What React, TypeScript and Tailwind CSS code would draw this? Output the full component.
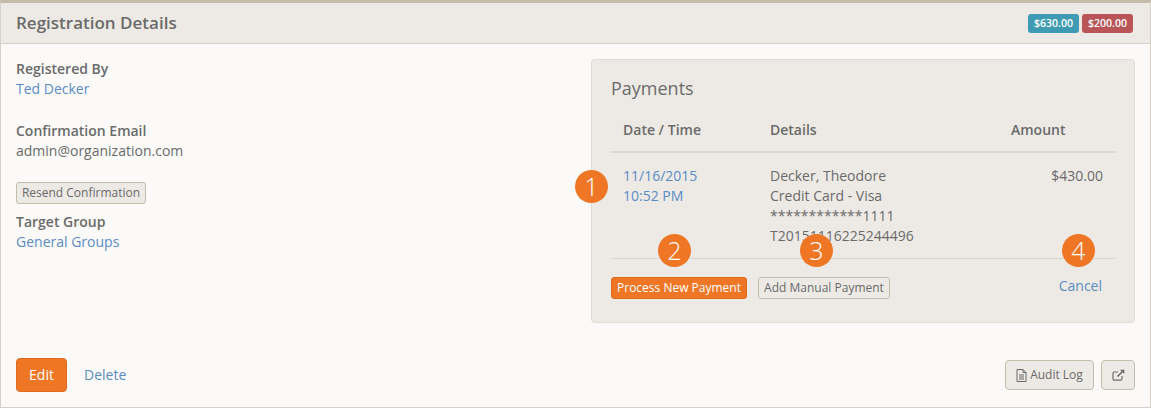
import React from "react";

const Badge = ({ n, className }: { n: number; className: string }) => (
  <div className={`absolute w-[33px] h-[33px] rounded-full bg-[#ee7625] text-white flex items-center justify-center text-[25px] font-light leading-none ${className}`}>
    {n}
  </div>
);

const DocIcon = () => (
  <svg width="11" height="13" viewBox="0 0 11 13" fill="none" stroke="#6a6a6a" strokeWidth="1" className="mr-[3px]">
    <path d="M1 .5h6l3 3v9H1z" />
    <path d="M7 .5v3h3M3 6h5M3 8h5M3 10h5" />
  </svg>
);

const ExternalIcon = () => (
  <svg width="13" height="12" viewBox="0 0 13 12" fill="none" stroke="#6a6a6a">
    <path d="M10 7v3a1.2 1.2 0 0 1-1.2 1.2H2.2A1.2 1.2 0 0 1 1 10V4.2A1.2 1.2 0 0 1 2.2 3H6" strokeWidth="1.2" />
    <path d="M5.5 7.5 11 2" strokeWidth="1.6" />
    <path d="M8 .7h4.3V5z" fill="#6a6a6a" stroke="none" />
  </svg>
);

export default function App() {
  return (
    <div className="w-[1151px] h-[408px] bg-[#fbfaf8] border-t-[3px] border-t-[#c4bcab] border-x border-x-[#d6d0c8] border-b border-b-[#d6d0c8] flex flex-col text-[14px] leading-[20px] text-[#6a6a6a] font-['Open_Sans',sans-serif] relative overflow-hidden">
      <div className="h-[41px] shrink-0 bg-[#edeae6] border-b border-[#d6d0c8] flex items-center justify-between pl-[15px] pr-[17px]">
        <h1 className="text-[17px] font-semibold leading-[20px] text-[#6a6a6a]">Registration Details</h1>
        <div className="flex gap-[3px]">
          <span className="h-[19px] w-[51px] rounded-[3px] bg-[#3f9bb3] text-white text-[10.5px] font-semibold flex items-center justify-center">$630.00</span>
          <span className="h-[19px] w-[51px] rounded-[3px] bg-[#b95557] text-white text-[10.5px] font-semibold flex items-center justify-center">$200.00</span>
        </div>
      </div>

      <div className="flex-1 flex justify-between pl-[15px] pr-[15px] pt-[15px]">
        <div className="flex flex-col w-[400px]">
          <div className="font-semibold">Registered By</div>
          <a className="text-[#5a8cc4]">Ted Decker</a>
          <div className="font-semibold mt-[22px]">Confirmation Email</div>
          <div>admin@organization.com</div>
          <button className="self-start mt-[21px] h-[22px] w-[130px] rounded-[3px] border border-[#c4bcab] bg-[#edeae6] text-[12px] leading-none text-[#6a6a6a] flex items-center justify-center whitespace-nowrap">Resend Confirmation</button>
          <div className="font-semibold mt-[8px]">Target Group</div>
          <a className="text-[#5a8cc4]">General Groups</a>
        </div>

        <div className="w-[544px] h-[264px] rounded-[4px] border border-[#e0dcd5] bg-[#edeae6] pt-[17px] px-[19px] flex flex-col">
          <h2 className="text-[18px] leading-[22px] text-[#6a6a6a]">Payments</h2>
          <div className="flex font-semibold h-[20px] mt-[21px] px-[12px]">
            <div className="w-[147px]">Date / Time</div>
            <div className="w-[241px]">Details</div>
            <div>Amount</div>
          </div>
          <div className="border-t-2 border-[#dad6cf] mt-[11px] pt-[13px] pb-[12px] px-[12px] flex">
            <div className="w-[147px] text-[#5a8cc4]">
              <div>11/16/2015</div>
              <div>10:52 PM</div>
            </div>
            <div className="flex-1">
              <div>Decker, Theodore</div>
              <div>Credit Card - Visa</div>
              <div>************1111</div>
              <div>T20151116225244496</div>
            </div>
            <div>$430.00</div>
          </div>
          <div className="border-t border-[#dad6cf] pt-[18px] flex items-start">
            <button className="h-[22px] w-[136px] rounded-[3px] bg-[#ee7625] border border-[#dd6a1e] text-white text-[12px] leading-none flex items-center justify-center whitespace-nowrap">Process New Payment</button>
            <button className="ml-[11px] h-[22px] w-[132px] rounded-[3px] border border-[#c4bcab] bg-[#edeae6] text-[12px] leading-none text-[#6a6a6a] flex items-center justify-center whitespace-nowrap">Add Manual Payment</button>
            <a className="ml-auto mr-[13px] text-[#5a8cc4] leading-[18px]">Cancel</a>
          </div>
        </div>
      </div>

      <div className="flex justify-between items-center px-[15px] pb-[15px]">
        <div className="flex items-center">
          <button className="h-[34px] w-[51px] rounded-[4px] bg-[#ee7625] border border-[#dd6a1e] text-white text-[14px] flex items-center justify-center">Edit</button>
          <a className="ml-[17px] text-[#5a8cc4]">Delete</a>
        </div>
        <div className="flex items-center gap-[7px]">
          <button className="h-[30px] w-[89px] rounded-[4px] border border-[#c4bcab] bg-[#edeae6] text-[12px] text-[#6a6a6a] flex items-center justify-center">
            <DocIcon />Audit Log
          </button>
          <button className="h-[30px] w-[34px] rounded-[4px] border border-[#c4bcab] bg-[#edeae6] flex items-center justify-center">
            <ExternalIcon />
          </button>
        </div>
      </div>

      <Badge n={1} className="left-[574px] top-[167px]" />
      <Badge n={2} className="left-[657px] top-[231px]" />
      <Badge n={3} className="left-[799px] top-[231px]" />
      <Badge n={4} className="left-[1061px] top-[231px]" />
    </div>
  );
}
